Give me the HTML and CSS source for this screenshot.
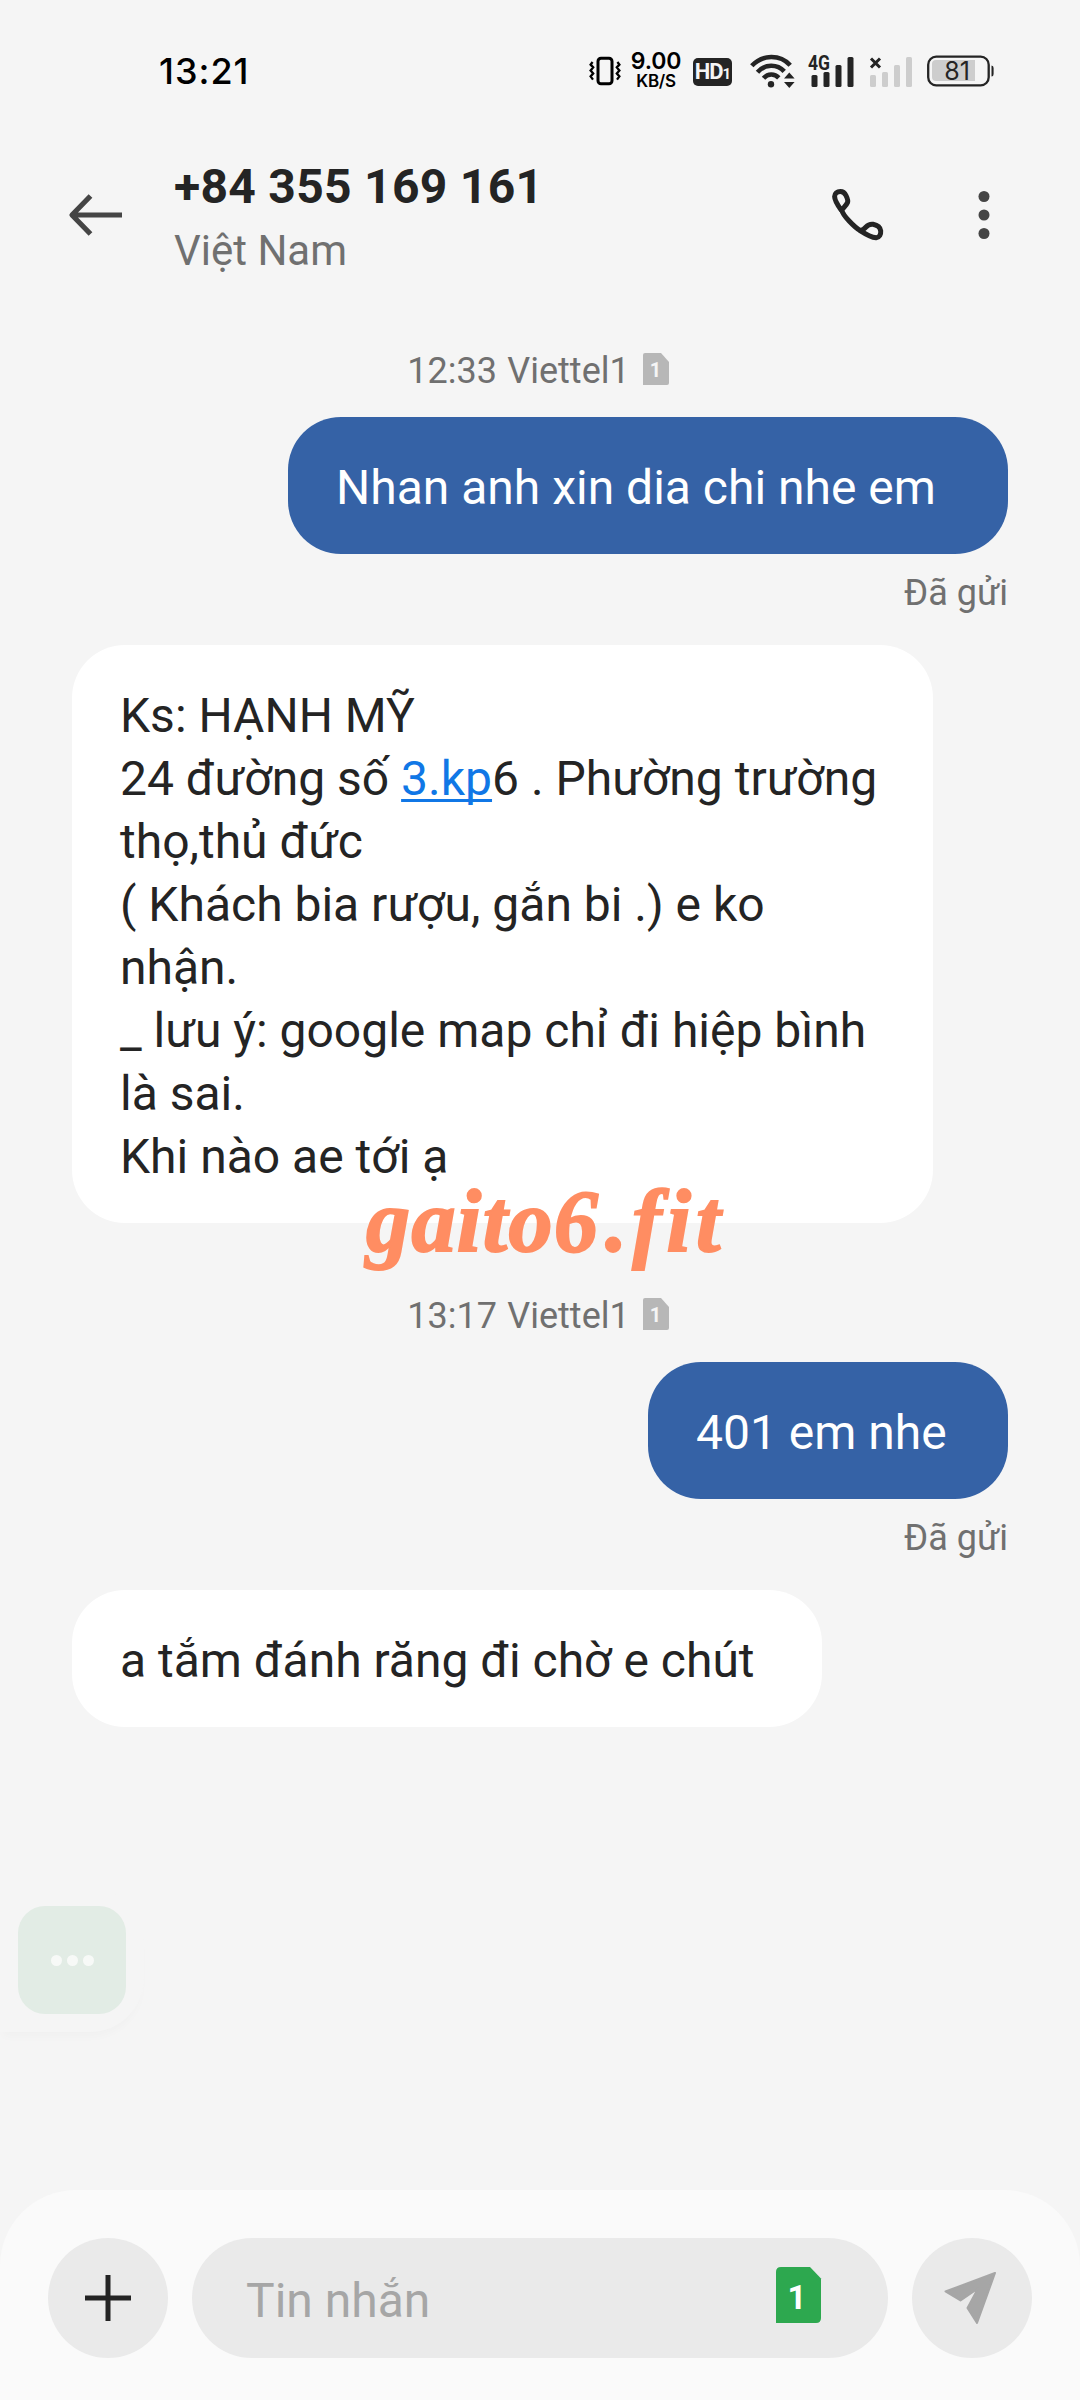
FILE: index.html
```html
<!DOCTYPE html>
<html lang="vi">
<head>
<meta charset="utf-8">
<title>+84 355 169 161</title>
<link rel="stylesheet" href="styles.css">
</head>
<body>
<div class="screen">
  <div class="status">
    <span class="clock">13:21</span>
    <div class="status-icons">
      <svg class="vibrate" width="32" height="30" viewBox="0 0 32 30" fill="none" stroke="#000"><rect x="9" y="2.3" width="14" height="25.4" rx="3" stroke-width="3"/><path d="M3.6 6L1.6 8.6L4.2 11.4L1.6 14.4L4.2 17.4L1.6 20.4L4 23.6M28.4 6L30.4 8.6L27.8 11.4L30.4 14.4L27.8 17.4L30.4 20.4L28 23.6" stroke-width="2.3"/></svg>
      <div class="speed"><span class="speed-value">9.00</span><span class="speed-unit">KB/S</span></div>
      <div class="hd">HD<small>1</small></div>
      <svg class="wifi" width="46" height="36" viewBox="0 0 46 36" fill="none" stroke="#242424" stroke-width="4.6"><path d="M1.8 12.8C12.5 1.2 30 1.2 40.2 12.2M7.5 19.2C15 10.7 27.2 10.7 34.2 18.4M13.5 25.2C18 20.3 24.5 20.3 28.8 24.8"/><circle cx="21" cy="31.3" r="3.2" fill="#242424" stroke="none"/><path d="M34 25.5L39.3 19.5L44.6 25.5ZM34 29L39.3 35L44.6 29Z" fill="#242424" stroke="none"/></svg>
      <svg class="signal" width="47" height="34" viewBox="0 0 47 34" fill="#242424"><text x="0" y="16.2" class="net" textLength="22" lengthAdjust="spacingAndGlyphs">4G</text><rect x="3.5" y="21" width="6" height="12" rx="1.5"/><rect x="15.5" y="18" width="6" height="15" rx="1.5"/><rect x="27.5" y="11" width="6" height="22" rx="1.5"/><rect x="39.5" y="3" width="6" height="30" rx="1.5"/></svg>
      <svg class="nosignal" width="44" height="34" viewBox="0 0 44 34" fill="#cdcdcd"><path d="M2 4.5L11 13.5M11 4.5L2 13.5" stroke="#242424" stroke-width="3"/><rect x="1" y="21" width="6" height="12" rx="1.5"/><rect x="13" y="18" width="6" height="15" rx="1.5"/><rect x="25" y="11" width="6" height="22" rx="1.5"/><rect x="37" y="3" width="6" height="30" rx="1.5"/></svg>
      <svg class="battery" width="68" height="32" viewBox="0 0 68 32"><rect x="1.2" y="1.7" width="60.5" height="28.6" rx="8" fill="none" stroke="#242424" stroke-width="2.3"/><path d="M9 5H48V26H9Q5 26 5 22V9Q5 5 9 5Z" fill="#cdcdcd"/><path d="M64.5 10.5Q66.6 10.5 66.6 13V19Q66.6 21.5 64.5 21.5Z" fill="#242424"/><text x="30" y="24.5" class="level" text-anchor="middle">81</text></svg>
    </div>
  </div>

  <header class="header">
    <svg class="back" width="54" height="42" viewBox="0 0 54 42" fill="none" stroke="#454545" stroke-width="5.2"><path d="M21.5 2L3 21L21.5 40M3 21H53" stroke-linejoin="round"/></svg>
    <div class="contact">
      <h1 class="number">+84 355 169 161</h1>
      <p class="region">Việt Nam</p>
    </div>
    <svg class="call" width="52" height="52" viewBox="0 0 52 52" fill="none" stroke="#242424" stroke-width="5" stroke-linejoin="round"><path d="M9.5 21.5C5.5 16 2.6 10.5 2.6 7.5C2.6 4.5 5 2.5 8.4 2.5C11.2 2.5 12.8 4 14 6.5C15.5 9.5 16.3 11.5 15.5 13.5C14.5 16 11.5 18.5 9.8 21.2C11 26.5 22 38 28.5 41.8C35 46 40 48.3 44.2 48.8C47.5 48.5 49 45.5 48.7 41.8C48.2 38.2 44.5 36 41 35.3C38 35 35.8 36 34 38C32 40.3 30 42 27 41.3"/></svg>
    <svg class="more" width="12" height="50" viewBox="0 0 12 50" fill="#454545"><circle cx="6" cy="6.5" r="5.5"/><circle cx="6" cy="25" r="5.5"/><circle cx="6" cy="43.5" r="5.5"/></svg>
  </header>

  <main class="chat">
    <div class="stamp"><span>12:33 Viettel1</span><svg width="26" height="32" viewBox="0 0 26 32"><path d="M2 0H18L26 9V30Q26 32 24 32H0V2Q0 0 2 0Z" fill="#b7b7b7"/><text x="12.6" y="23.5" class="sim-no" text-anchor="middle">1</text></svg></div>
    <div class="bubble out first">Nhan anh xin dia chi nhe em</div>
    <div class="sent">Đã gửi</div>
    <div class="bubble in address">Ks: HẠNH MỸ<br>24 đường số <a class="link">3.kp</a>6 . Phường trường<br>thọ,thủ đức<br>( Khách bia rượu, gắn bi .) e ko<br>nhận.<br>_ lưu ý: google map chỉ đi hiệp bình<br>là sai.<br>Khi nào ae tới ạ
      <div class="watermark"><span>gaito6</span><span class="tail">.fit</span></div>
    </div>
    <div class="stamp later"><span>13:17 Viettel1</span><svg width="26" height="32" viewBox="0 0 26 32"><path d="M2 0H18L26 9V30Q26 32 24 32H0V2Q0 0 2 0Z" fill="#b7b7b7"/><text x="12.6" y="23.5" class="sim-no" text-anchor="middle">1</text></svg></div>
    <div class="bubble out room">401 em nhe</div>
    <div class="sent">Đã gửi</div>
    <div class="bubble in wait">a tắm đánh răng đi chờ e chút</div>
  </main>

  <div class="floating">
    <div class="floating-tile"><i></i><i></i><i></i></div>
  </div>

  <footer class="composer">
    <div class="round"><svg width="46" height="48" viewBox="0 0 46 48" stroke="#242424" stroke-width="5"><path d="M23 1V47M0 24H46"/></svg></div>
    <div class="field"><span>Tin nhắn</span><svg width="45" height="56" viewBox="0 0 45 56"><path d="M5 0H34L45 11.5V51Q45 56 40 56H0V5Q0 0 5 0Z" fill="#2da84f"/><text x="21" y="42" class="sim-big" text-anchor="middle">1</text></svg></div>
    <div class="round"><svg class="send" width="54" height="54" viewBox="0 0 54 54"><path d="M52 2L2.5 20.5L17.5 29.5L35 17.5L24.5 37L34 52Z" fill="#a6a6a6" stroke="#a6a6a6" stroke-width="2" stroke-linejoin="round"/></svg></div>
  </footer>
</div>
</body>
</html>
```
FILE: styles.css
```css
* { box-sizing: border-box; }
body { margin: 0; background: #f5f5f5; font-family: Roboto, "Noto Sans", sans-serif; color: #242424; }
svg { overflow: visible; }
.screen { position: relative; width: 1080px; height: 2400px; display: flex; flex-direction: column; overflow: hidden; }

.status { height: 142px; flex: none; display: flex; align-items: center; justify-content: space-between; padding: 0 85px 0 159px; }
.clock { font: 500 36px/44px Inter, sans-serif; letter-spacing: 1px; color: #000; }
.status-icons { display: flex; align-items: center; }
.speed { width: 52px; margin-left: 9px; display: flex; flex-direction: column; align-items: center; font-family: Inter, sans-serif; color: #000; }
.speed-value { font-size: 23px; line-height: 20px; font-weight: 600; letter-spacing: -.2px; }
.speed-unit { font-size: 17px; line-height: 20px; font-weight: 600; letter-spacing: -.3px; }
.hd { width: 39px; height: 28px; margin: 2px 0 0 11px; border-radius: 5px; background: #242424; color: #f5f5f5; font: 700 22px/28px Roboto, sans-serif; text-align: center; letter-spacing: -1px; white-space: nowrap; }
.hd small { font-size: 15px; }
.wifi { margin-left: 18px; }
.signal { margin-left: 12px; }
.nosignal { margin-left: 14px; }
.battery { margin-left: 14px; }
.net { font: 700 21px Roboto, sans-serif; }
.level { font: 400 25px Inter, sans-serif; fill: #242424; }

.header { height: 146px; flex: none; display: flex; align-items: center; padding: 0 90px 0 69px; }
.contact { width: 659px; margin-left: 51px; padding-top: 10px; }
.number { margin: 0; font-size: 48px; line-height: 62px; font-weight: 700; letter-spacing: .3px; }
.region { margin: 0; font-size: 42px; line-height: 66px; color: #707070; }
.more { margin-left: 94px; }

.chat { flex: 1; display: flex; flex-direction: column; align-items: flex-start; padding: 61px 72px 0; }
.stamp { align-self: center; display: flex; align-items: center; gap: 13px; height: 44px; margin: 0 4px 24px 0; font-size: 36px; line-height: 44px; color: #707070; white-space: nowrap; word-spacing: 1.5px; }
.stamp svg { margin-top: -4px; }
.stamp.later { margin-top: 71px; }
.sim-no { font: 700 20px Roboto, sans-serif; fill: #f5f5f5; }
.bubble { padding: 39px 0 35px 48px; border-radius: 53px; font-size: 48px; line-height: 63px; white-space: nowrap; }
.out { align-self: flex-end; background: #3562a6; color: #fff; }
.in { background: #fff; }
.first { width: 720px; }
.address { position: relative; width: 861px; }
.room { width: 360px; }
.wait { width: 750px; }
.link { color: #1077e6; text-decoration: underline; text-decoration-thickness: 3px; text-underline-offset: 4px; text-decoration-skip-ink: none; }
.sent { align-self: flex-end; margin: 17px 0 30px; font-size: 36px; line-height: 44px; color: #707070; }
.watermark { position: absolute; left: 294px; top: 527px; display: flex; gap: 6px; font: italic 700 88px/100px "Liberation Serif", serif; letter-spacing: 1.4px; color: #ff8d62; -webkit-text-stroke: 2px #ff8d62; }
.tail { letter-spacing: 5px; }

.floating { position: absolute; left: 0; top: 1888px; width: 144px; height: 144px; padding: 18px; border-radius: 0 54px 54px 0; box-shadow: 0 8px 8px -3px rgba(0, 0, 0, .018); background: #f5f5f5; }
.floating-tile { width: 108px; height: 108px; display: flex; align-items: center; justify-content: center; gap: 5px; border-radius: 27px; background: #e2ece5; }
.floating-tile i { width: 11px; height: 11px; border-radius: 50%; background: #f7f9f7; }

.composer { height: 210px; flex: none; display: flex; align-items: flex-start; gap: 24px; padding: 48px 48px 0; border-radius: 76px 76px 0 0; background: #fafafa; }
.round { width: 120px; height: 120px; flex: none; display: flex; align-items: center; justify-content: center; border-radius: 50%; background: #eaeaea; }
.field { flex: 1; height: 120px; display: flex; align-items: center; justify-content: space-between; padding: 0 67px 0 54px; border-radius: 60px; background: #eaeaea; font-size: 48px; line-height: 60px; color: #a6a6a6; }
.field span { padding-top: 5px; }
.field svg { margin-top: -6px; }
.send { margin: 0 4px 0 0; }
.sim-big { font: 700 33px Roboto, sans-serif; fill: #fff; }
```
